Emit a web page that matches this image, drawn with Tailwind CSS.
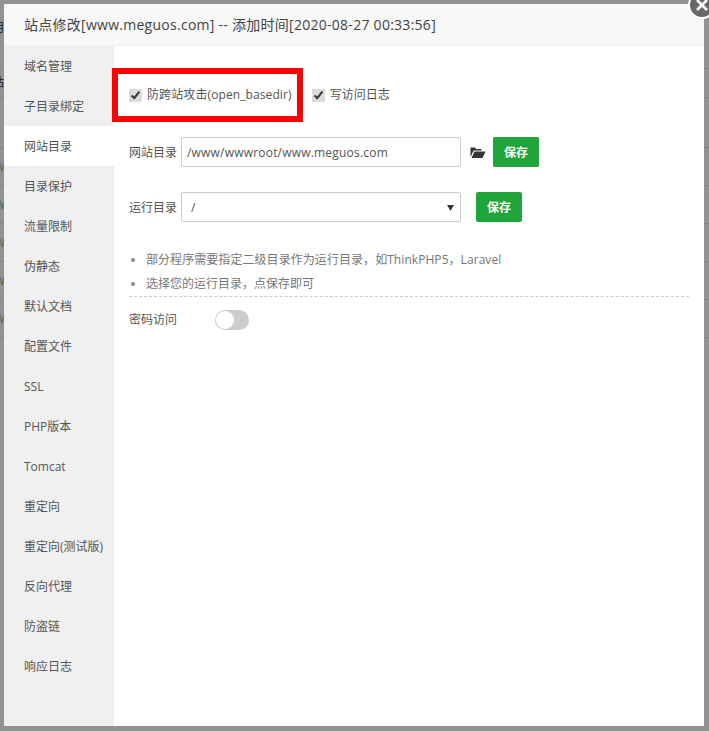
<!DOCTYPE html>
<html lang="zh">
<head>
<meta charset="utf-8">
<script src="https://cdn.jsdelivr.net/npm/@tailwindcss/browser@4"></script>
</head>
<body class="m-0 bg-[#929292]">
<div class="relative h-[731px] w-[709px] overflow-hidden bg-[#929292] font-['Open_Sans','Noto_Sans_CJK_SC',sans-serif] text-[12px] text-[#555]">
  <div class="absolute inset-0 flex flex-col text-[12px] leading-none">
    <div class="flex h-[69px] shrink-0 items-center border-b border-[#858585] pb-[12px] text-[#222]"><span class="-ml-[8px]">用</span></div>
    <div class="flex h-[29px] shrink-0 items-center border-b border-[#858585] text-[#222]"><span class="-ml-[8px]">站</span></div>
    <div class="h-[50px] shrink-0 border-b border-[#7f7f7f]"></div>
    <div class="flex h-[38px] shrink-0 items-center border-b border-[#858585] text-[#3f6f52]"><span class="-ml-[6px]">W</span></div>
    <div class="flex h-[38px] shrink-0 items-center border-b border-[#858585] text-[#3f6f52]"><span class="-ml-[6px]">W</span></div>
    <div class="flex h-[38px] shrink-0 items-center border-b border-[#858585] text-[#3f6f52]"><span class="-ml-[6px]">W</span></div>
    <div class="flex h-[38px] shrink-0 items-center border-b border-[#858585] text-[#3f6f52]"><span class="-ml-[6px]">W</span></div>
    <div class="flex h-[38px] shrink-0 items-center border-b border-[#858585] text-[#3f6f52]"><span class="-ml-[6px]">W</span></div>
  </div>
  <div class="absolute left-[4px] top-[4px] flex h-[722px] w-[700px] flex-col bg-white">
    <div class="flex h-[42px] shrink-0 items-center border-b border-[#eee] bg-[#f8f8f8] pl-[20px] text-[14px] leading-none tracking-[0.27px] text-[#444]">站点修改[www.meguos.com] -- 添加时间[2020-08-27 00:33:56]</div>
    <div class="flex min-h-0 flex-1">
      <nav class="flex h-full w-[110px] shrink-0 flex-col bg-[#f0f0f1] text-[#555]">
        <div class="flex h-[40px] items-center pl-[20px] pt-[2px]">域名管理</div>
        <div class="flex h-[40px] items-center pl-[20px] pt-[2px]">子目录绑定</div>
        <div class="flex h-[40px] items-center bg-white pl-[20px] pt-[2px]">网站目录</div>
        <div class="flex h-[40px] items-center pl-[20px] pt-[2px]">目录保护</div>
        <div class="flex h-[40px] items-center pl-[20px] pt-[2px]">流量限制</div>
        <div class="flex h-[40px] items-center pl-[20px] pt-[2px]">伪静态</div>
        <div class="flex h-[40px] items-center pl-[20px] pt-[2px]">默认文档</div>
        <div class="flex h-[40px] items-center pl-[20px] pt-[2px]">配置文件</div>
        <div class="flex h-[40px] items-center pl-[20px] pt-[2px]">SSL</div>
        <div class="flex h-[40px] items-center pl-[20px] pt-[2px]">PHP版本</div>
        <div class="flex h-[40px] items-center pl-[20px] pt-[2px]">Tomcat</div>
        <div class="flex h-[40px] items-center pl-[20px] pt-[2px]">重定向</div>
        <div class="flex h-[40px] items-center pl-[20px] pt-[2px]">重定向(测试版)</div>
        <div class="flex h-[40px] items-center pl-[20px] pt-[2px]">反向代理</div>
        <div class="flex h-[40px] items-center pl-[20px] pt-[2px]">防盗链</div>
        <div class="flex h-[40px] items-center pl-[20px] pt-[2px]">响应日志</div>
      </nav>
      <main class="relative min-w-0 flex-1 pl-[15px] pr-[15px]">
        <div class="mt-[42px] flex h-[14px] items-center">
          <input type="checkbox" checked class="m-0 h-[13px] w-[13px] accent-[#dcdcdc]">
          <span class="ml-[5px] tracking-[0.1px]">防跨站攻击(open_basedir)</span>
          <input type="checkbox" checked class="ml-[20px] h-[13px] w-[13px] accent-[#dcdcdc]">
          <span class="ml-[5px]">写访问日志</span>
        </div>
        <div class="mt-[35px] flex h-[30px] items-center">
          <span class="w-[52px] pt-[2px]">网站目录</span>
          <div class="flex h-[30px] w-[280px] items-center rounded-[2px] border border-[#ccc] pl-[5px] pt-[2px] tracking-[0.2px] text-[#555]">/www/wwwroot/www.meguos.com</div>
          <svg class="ml-[9px] h-[12px] w-[16px]" viewBox="0 0 15 12"><path fill="#333" d="M0 11V1.5h4.5l1 1.5H11v1.5H3.2L0 11Zm1 1 3-6.5h11L12 12H1Z"/></svg>
          <button class="ml-[7px] h-[30px] w-[46px] rounded-[2px] bg-[#20a53a] pt-[2px] text-[12px] font-bold text-white">保存</button>
        </div>
        <div class="mt-[25px] flex h-[30px] items-center">
          <span class="w-[52px] pt-[2px]">运行目录</span>
          <div class="flex h-[30px] w-[280px] items-center justify-between rounded-[2px] border border-[#ccc] pl-[9px] pr-[6px] pt-[2px] text-[#555]"><span>/</span><svg class="h-[6px] w-[7px]" viewBox="0 0 7 6"><path fill="#333" d="M0 0h7L3.5 6Z"/></svg></div>
          <button class="ml-[15px] h-[30px] w-[46px] rounded-[2px] bg-[#20a53a] pt-[2px] text-[12px] font-bold text-white">保存</button>
        </div>
        <ul class="mb-[1px] mt-[25px] text-[#777]">
          <li class="flex h-[24px] items-center pt-[1px]"><span class="ml-[2px] h-[4px] w-[4px] rounded-full bg-[#888]"></span><span class="ml-[11px] tracking-[0.06px]">部分程序需要指定二级目录作为运行目录，如ThinkPHP5，Laravel</span></li>
          <li class="flex h-[24px] items-center pt-[1px]"><span class="ml-[2px] h-[4px] w-[4px] rounded-full bg-[#888]"></span><span class="ml-[11px]">选择您的运行目录，点保存即可</span></li>
        </ul>
        <div class="border-t border-dashed border-[#ccc]"></div>
        <div class="mt-[13px] flex h-[20px] items-center">
          <span class="w-[86px]">密码访问</span>
          <span class="relative h-[20px] w-[34px] rounded-full bg-[#ccc]"><span class="absolute left-[1px] top-[1px] h-[18px] w-[18px] rounded-full bg-white"></span></span>
        </div>
      </main>
    </div>
  </div>
  <div class="absolute left-[112px] top-[68px] h-[54px] w-[191px] border-[6px] border-[#f00]"></div>
  <div class="absolute left-[688px] top-[-9px] flex h-[28px] w-[28px] items-center justify-center rounded-full border-[2px] border-white bg-[#666]"><svg class="h-[12px] w-[12px]" viewBox="0 0 12 12"><path stroke="#fff" stroke-width="2.6" d="M1 1l10 10M11 1 1 11"/></svg></div>
</div>
</body>
</html>
